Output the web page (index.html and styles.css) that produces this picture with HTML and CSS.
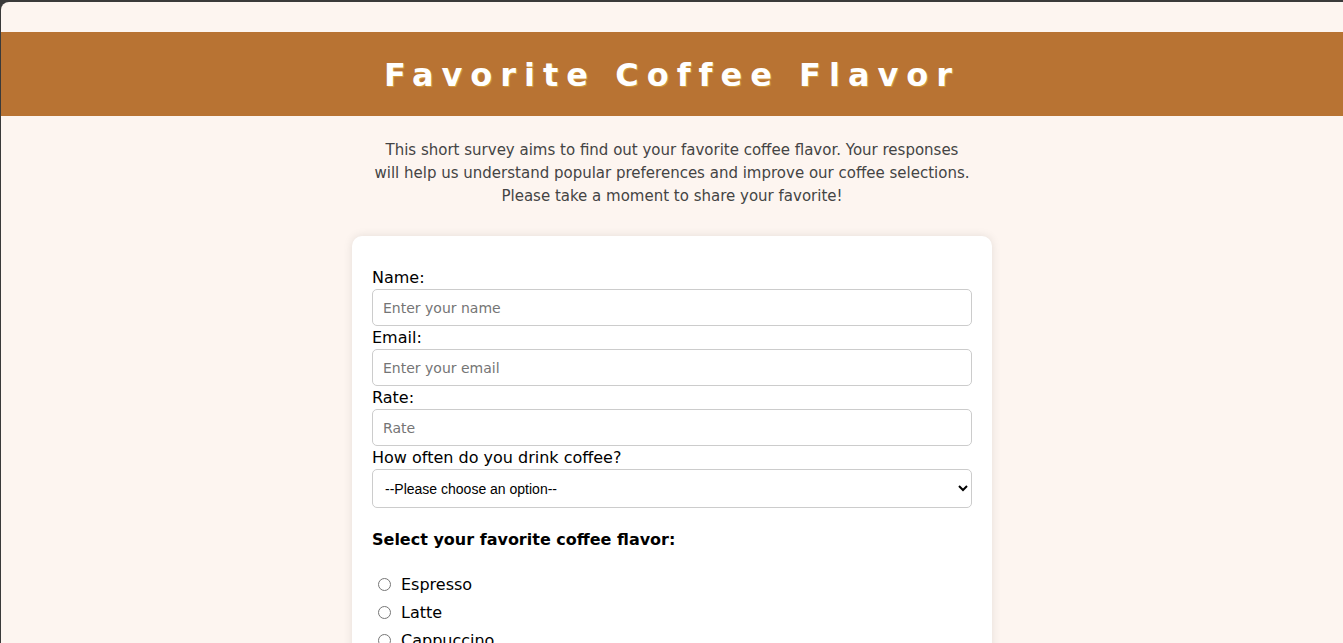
FILE: index.html
```html
<!DOCTYPE html>
<html lang="en">
<head>
  <meta charset="UTF-8">
  <meta name="viewport" content="width=device-width, initial-scale=1.0">
  <title>Favorite Coffee Flavor</title>
  <link rel="stylesheet" href="styles.css">
</head>
<body>
  <div class="page">
    <header class="banner">
      <h1>Favorite Coffee Flavor</h1>
    </header>

    <p class="intro">
      This short survey aims to find out your favorite coffee flavor. Your responses
      will help us understand popular preferences and improve our coffee selections.
      Please take a moment to share your favorite!
    </p>

    <!-- Survey Form -->
    <form class="card">
      <label for="name">Name:</label>
      <input type="text" id="name" placeholder="Enter your name">

      <label for="email">Email:</label>
      <input type="email" id="email" placeholder="Enter your email">

      <label for="rate">Rate:</label>
      <input type="number" id="rate" placeholder="Rate">

      <label for="often">How often do you drink coffee?</label>
      <select id="often">
        <option>--Please choose an option--</option>
        <option>Every day</option>
        <option>A few times a week</option>
        <option>Rarely</option>
      </select>

      <p class="question">Select your favorite coffee flavor:</p>

      <div class="options">
        <label class="option"><input type="radio" name="flavor"> Espresso</label>
        <label class="option"><input type="radio" name="flavor"> Latte</label>
        <label class="option"><input type="radio" name="flavor"> Cappuccino</label>
        <label class="option"><input type="radio" name="flavor"> Mocha</label>
      </div>
    </form>
  </div>
</body>
</html>
```

FILE: styles.css
```css
/* Global Styles */
html {
  background: #3a3a3a;
}

body {
  margin: 2px 0 0 1px;
  font-family: "Comic Sans MS", "DejaVu Sans", sans-serif;
  color: #444;
}

.page {
  background: #fdf5f0;
  border-top-left-radius: 8px;
  padding-top: 30px;
  min-height: 700px;
  overflow: hidden;
}

/* Header */
.banner {
  background: #b87333;
  text-align: center;
}

h1 {
  margin: 0;
  padding: 21px 0 19px;
  color: #fff;
  font-size: 32px;
  line-height: 44px;
  letter-spacing: 8px;
  text-shadow: 1px 1px 1px rgba(255, 220, 80, 0.4);
}

.intro {
  max-width: 600px;
  margin: 23px auto 28px;
  text-align: center;
  font-size: 15px;
  line-height: 23px;
  color: #444;
}

/* Card */
.card {
  width: 600px;
  margin: 0 auto;
  padding: 30px 20px 20px;
  background: #fff;
  border-radius: 10px;
  box-shadow: 0 0 10px rgba(0, 0, 0, 0.1);
}

.card > label {
  display: block;
  font-size: 16px;
  line-height: 23px;
  color: #000;
}

.card input[type="text"],
.card input[type="email"],
.card input[type="number"] {
  display: block;
  box-sizing: border-box;
  width: 100%;
  height: 37px;
  margin: 0;
  padding: 0 10px;
  border: 1px solid #ccc;
  border-radius: 5px;
  font-family: inherit;
  font-size: 14px;
}

.card input::placeholder {
  color: #757575;
}

select {
  display: block;
  box-sizing: border-box;
  width: 100%;
  height: 39px;
  padding: 0 8px;
  border: 1px solid #ccc;
  border-radius: 5px;
  background: #fff;
  font-family: "Liberation Sans", Arial, sans-serif;
  font-size: 14px;
  color: #000;
}

.question {
  margin: 21px 0 19px;
  font-weight: bold;
  font-size: 16px;
  line-height: 22px;
  color: #000;
}

.options {
  display: flex;
  flex-direction: column;
}

.option {
  display: flex;
  align-items: center;
  height: 28px;
  font-size: 16px;
  color: #000;
}

.option input {
  margin: 0 10px 0 6px;
  width: 13px;
  height: 13px;
}
```
